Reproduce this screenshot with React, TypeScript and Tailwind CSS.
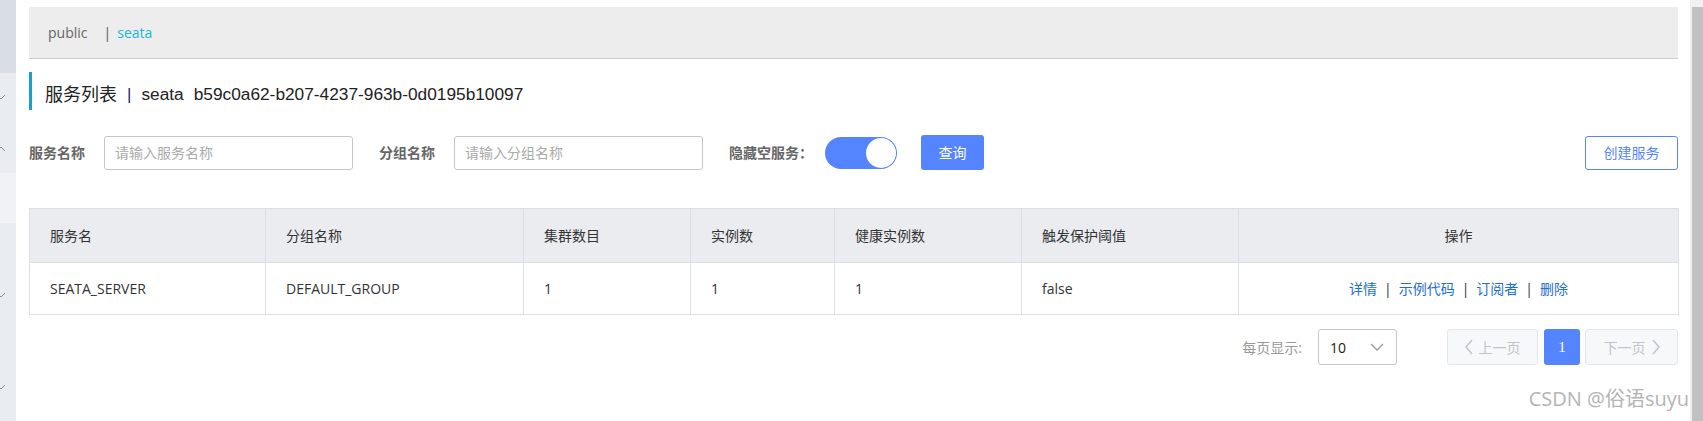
import React from 'react';

const columns = [
  { title: '服务名', width: 236 },
  { title: '分组名称', width: 258 },
  { title: '集群数目', width: 167 },
  { title: '实例数', width: 144 },
  { title: '健康实例数', width: 187 },
  { title: '触发保护阈值', width: 217 },
  { title: '操作', width: 440, center: true },
];

const rows = [['SEATA_SERVER', 'DEFAULT_GROUP', '1', '1', '1', 'false']];

const Chevron: React.FC<{ up?: boolean; top: string }> = ({ up, top }) => (
  <svg className={`absolute left-[-4px] ${top}`} width="10" height="8" viewBox="0 0 10 8">
    <polyline
      points={up ? '1,6 5,2 9,6' : '1,2 5,6 9,2'}
      fill="none"
      stroke="#8a8f99"
      strokeWidth="1"
    />
  </svg>
);

export default function App() {
  return (
    <div className="relative flex w-[1703px] h-[421px] overflow-hidden bg-white font-['Open_Sans','Noto_Sans_CJK_SC',sans-serif] text-[14px] text-[#333]">
      {/* Sidebar edge */}
      <aside className="relative w-[16px] shrink-0 flex flex-col">
        <div className="h-[73px] bg-[#d9dde4]" />
        <div className="h-[100px] bg-[#e9ecf0]" />
        <div className="h-[50px] bg-[#f1f2f5]" />
        <div className="flex-1 bg-[#e9ecf0]" />
        <Chevron top="top-[93px]" />
        <Chevron up top="top-[145px]" />
        <Chevron top="top-[291px]" />
        <Chevron top="top-[383px]" />
      </aside>

      {/* Main */}
      <main className="w-[1674px] shrink-0 pl-[13px] pr-[12px] pt-[7px]">
        {/* Breadcrumb */}
        <div className="h-[52px] bg-[#ededed] border-b border-[#cccccc] flex items-center px-[19px] text-[14px]">
          <span className="text-[#666]">public</span>
          <span className="ml-[16px] text-[#555]">|</span>
          <span className="ml-[6px] text-[#1cb5d6]">seata</span>
        </div>

        {/* Title */}
        <div className="mt-[13px] h-[38px] border-l-[3px] border-[#1a9fcf] flex items-center pt-[8px] pl-[13px] text-[18px] text-[#222] font-['Liberation_Sans','Noto_Sans_CJK_SC',sans-serif]">
          <span>服务列表</span>
          <span className="mx-[10px] text-[17px] text-[#1a2a6c]">|</span>
          <span className="text-[17.3px]">seata</span>
          <span className="ml-[10px] text-[17.3px]">b59c0a62-b207-4237-963b-0d0195b10097</span>
        </div>

        {/* Filters */}
        <div className="mt-[25px] h-[35px] flex items-center">
          <span className="font-bold text-[#666]">服务名称</span>
          <div className="ml-[19px] w-[249px] h-[34px] border border-[#c4c6cf] rounded-[3px] flex items-center px-[10px] text-[#aaa]">
            请输入服务名称
          </div>
          <span className="ml-[26px] font-bold text-[#666]">分组名称</span>
          <div className="ml-[19px] w-[249px] h-[34px] border border-[#c4c6cf] rounded-[3px] flex items-center px-[10px] text-[#aaa]">
            请输入分组名称
          </div>
          <span className="ml-[26px] font-bold text-[#666]">隐藏空服务：</span>
          <div className="ml-[12px] w-[72px] h-[32px] rounded-full bg-[#5584ff] flex items-center justify-end pr-[1px]">
            <div className="w-[30px] h-[30px] rounded-full bg-white" />
          </div>
          <button className="ml-[24px] w-[63px] h-[35px] rounded-[3px] bg-[#5584ff] text-white">查询</button>
          <button className="ml-auto w-[93px] h-[34px] rounded-[3px] border border-[#5584ff] text-[#5584ff]">
            创建服务
          </button>
        </div>

        {/* Table */}
        <table className="mt-[38px] w-[1649px] table-fixed border-collapse border border-[#dcdfe6]">
          <colgroup>
            {columns.map((c) => (
              <col key={c.title} style={{ width: c.width }} />
            ))}
          </colgroup>
          <thead>
            <tr className="h-[54px] bg-[#ebecf0]">
              {columns.map((c) => (
                <th
                  key={c.title}
                  className={`border border-[#dcdfe6] font-normal px-[20px] ${c.center ? 'text-center' : 'text-left'}`}
                >
                  {c.title}
                </th>
              ))}
            </tr>
          </thead>
          <tbody>
            {rows.map((r) => (
              <tr key={r[0]} className="h-[52px]">
                {r.map((cell, i) => (
                  <td key={i} className="border border-[#dcdfe6] px-[20px]">
                    {cell}
                  </td>
                ))}
                <td className="border border-[#dcdfe6] text-center">
                  <span className="text-[#1f6ed4]">详情</span>
                  <span className="mx-[7px]">|</span>
                  <span className="text-[#1f6ed4]">示例代码</span>
                  <span className="mx-[7px]">|</span>
                  <span className="text-[#1f6ed4]">订阅者</span>
                  <span className="mx-[7px]">|</span>
                  <span className="text-[#1f6ed4]">删除</span>
                </td>
              </tr>
            ))}
          </tbody>
        </table>

        {/* Pagination */}
        <div className="mt-[14px] h-[36px] flex items-center justify-end">
          <span className="text-[#999]">每页显示:</span>
          <div className="ml-[16px] w-[79px] h-[36px] border border-[#c4c6cf] rounded-[3px] flex items-center justify-between pl-[11px] pr-[12px] text-[#222]">
            <span>10</span>
            <svg width="14" height="9" viewBox="0 0 14 9">
              <polyline points="1,1 7,7 13,1" fill="none" stroke="#999" strokeWidth="1.3" />
            </svg>
          </div>
          <div className="ml-[50px] w-[91px] h-[36px] bg-[#f7f8fa] border border-[#e6e7eb] rounded-[3px] flex items-center justify-center gap-[6px] text-[#c0c4cc]">
            <svg width="8" height="16" viewBox="0 0 8 16">
              <polyline points="7,1 1,8 7,15" fill="none" stroke="#c0c4cc" strokeWidth="1.5" />
            </svg>
            <span>上一页</span>
          </div>
          <div className="ml-[6px] w-[36px] h-[36px] bg-[#5584ff] rounded-[3px] flex items-center justify-center text-white font-['Liberation_Serif',serif] text-[15px]">
            1
          </div>
          <div className="ml-[5px] w-[93px] h-[36px] bg-[#f7f8fa] border border-[#e6e7eb] rounded-[3px] flex items-center justify-center gap-[6px] text-[#c0c4cc]">
            <span>下一页</span>
            <svg width="8" height="16" viewBox="0 0 8 16">
              <polyline points="1,1 7,8 1,15" fill="none" stroke="#c0c4cc" strokeWidth="1.5" />
            </svg>
          </div>
        </div>
      </main>

      {/* Scrollbar */}
      <div className="w-[13px] shrink-0 bg-[#f1f1f1] pt-[7px] pl-[2px] flex flex-col">
        <div className="flex-1 bg-[#c1c1c1]" />
      </div>

      {/* Watermark */}
      <div className="absolute right-[14px] bottom-[7px] text-[20px] text-[#b4b4b4]">
        CSDN @俗语suyu
      </div>
    </div>
  );
}
